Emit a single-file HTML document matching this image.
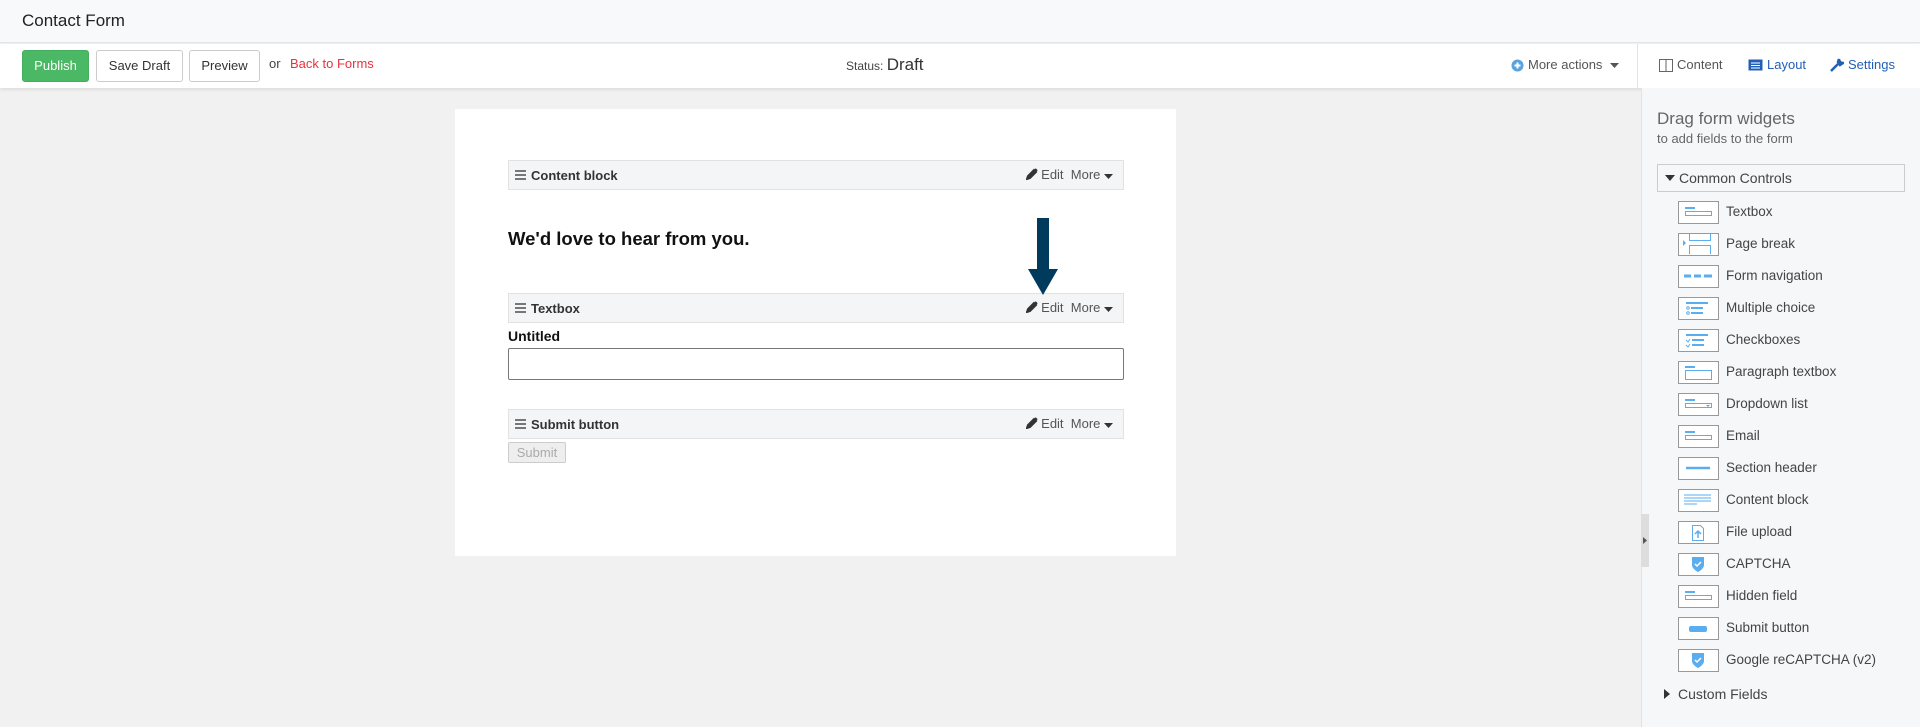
<!DOCTYPE html>
<html><head><meta charset="utf-8"><style>
*{box-sizing:border-box;margin:0;padding:0}
body{width:1920px;height:727px;overflow:hidden;background:#f1f1f1;font-family:"Liberation Sans",sans-serif;position:relative;color:#333}
.abs{position:absolute}
#top{left:0;top:0;width:1920px;height:43px;background:#f8f9fb;border-bottom:1px solid #e2e3e6}
#top span{position:absolute;left:22px;top:11px;font-size:17px;color:#222}
#bar{left:0;top:44px;width:1920px;height:44px;background:#fff;box-shadow:0 2px 3px rgba(0,0,0,.08)}
.btn{position:absolute;top:6px;height:32px;border:1px solid #ccc;border-radius:3px;background:#fff;font-size:13px;color:#333;text-align:center;line-height:30px}
#panel{left:1641px;top:88px;width:279px;height:639px;background:#f6f7f9;border-left:1px solid #e3e3e3}
.item{position:absolute;left:36px;height:23px}
.ib{position:absolute;left:0;top:0;width:41px;height:23px;border:1.5px solid #999;background:#fff}
.it{position:absolute;left:48px;top:3px;font-size:13.5px;color:#444;white-space:nowrap}
.card{left:455px;top:109px;width:721px;height:447px;background:#fff}
.wb{position:absolute;left:53px;width:616px;height:30px;background:#f4f5f7;border:1px solid #e1e2e4;font-size:13px;font-weight:bold;color:#333}
.wb .h{position:absolute;left:6px;top:9px;width:11px;height:10px;border-top:2px solid #777;border-bottom:2px solid #777}
.wb .h:after{content:"";position:absolute;left:0;top:2px;width:11px;height:2px;background:#777}
.wb .t{position:absolute;left:22px;top:7px}
.wb .r{position:absolute;right:10px;top:6px;font-weight:normal;color:#555;font-size:13px;white-space:nowrap}
.wb .r svg{vertical-align:-1px}
</style></head><body>
<div id="top" class="abs"><span>Contact Form</span></div>
<div id="bar" class="abs">
<div class="btn" style="left:22px;width:67px;background:#4bb866;border-color:#45ad5e;color:#fff">Publish</div>
<div class="btn" style="left:96px;width:87px">Save Draft</div>
<div class="btn" style="left:189px;width:71px">Preview</div>
<span class="abs" style="left:269px;top:12px;font-size:13px;color:#444">or</span>
<span class="abs" style="left:290px;top:12px;font-size:13px;color:#e8333f">Back to Forms</span>
<span class="abs" style="left:846px;top:11px;font-size:12px;color:#444">Status: <span style="font-size:17px;color:#333">Draft</span></span>
<svg class="abs" style="left:1511px;top:15px" width="13" height="13"><circle cx="6.5" cy="6.5" r="6" fill="#5aa2e0"/><path d="M6.5 3.5v6M3.5 6.5h6" stroke="#fff" stroke-width="2"/></svg>
<span class="abs" style="left:1528px;top:13px;font-size:13px;color:#555">More actions</span>
<svg class="abs" style="left:1610px;top:19px" width="9" height="6"><path d="M0 0h9L4.5 5z" fill="#555"/></svg>
<div class="abs" style="left:1637px;top:0;width:1px;height:44px;background:#e4e4e4"></div>
<svg class="abs" style="left:1659px;top:15px" width="14" height="13"><rect x=".5" y=".5" width="13" height="12" fill="none" stroke="#666"/><path d="M7 1v11" stroke="#666"/></svg>
<span class="abs" style="left:1677px;top:13px;font-size:13px;color:#555">Content</span>
<svg class="abs" style="left:1748px;top:15px" width="15" height="12"><rect x=".5" y=".5" width="14" height="11" fill="#2360b5"/><path d="M3 4h9M3 6.5h9M3 9h9" stroke="#fff"/></svg>
<span class="abs" style="left:1767px;top:13px;font-size:13px;color:#2360b5">Layout</span>
<svg class="abs" style="left:1830px;top:14px" width="14" height="14"><path d="M1 13L8 6M9 1a4 4 0 0 0 4 4l-3 2-2-3z" stroke="#2360b5" stroke-width="2.5" fill="#2360b5"/></svg>
<span class="abs" style="left:1848px;top:13px;font-size:13px;color:#2360b5">Settings</span>
</div>

<div class="card abs">
<div class="wb" style="top:51px"><div class="h"></div><span class="t">Content block</span><span class="r"><svg width="12" height="12"><path d="M1 11l1-3 6-6 2 2-6 6z M9 1l2 2" stroke="#333" stroke-width="2" fill="#333"/></svg> Edit &nbsp;More <svg width="9" height="6"><path d="M0 0h9L4.5 5z" fill="#333"/></svg></span></div>
<div class="abs" style="left:53px;top:119px;font-size:18.5px;font-weight:bold;color:#111">We'd love to hear from you.</div>
<div class="wb" style="top:184px"><div class="h"></div><span class="t">Textbox</span><span class="r"><svg width="12" height="12"><path d="M1 11l1-3 6-6 2 2-6 6z M9 1l2 2" stroke="#333" stroke-width="2" fill="#333"/></svg> Edit &nbsp;More <svg width="9" height="6"><path d="M0 0h9L4.5 5z" fill="#333"/></svg></span></div>
<div class="abs" style="left:53px;top:219px;font-size:14px;font-weight:bold;color:#111">Untitled</div>
<div class="abs" style="left:53px;top:239px;width:616px;height:32px;border:1px solid #777;border-radius:2px"></div>
<div class="wb" style="top:300px"><div class="h"></div><span class="t">Submit button</span><span class="r"><svg width="12" height="12"><path d="M1 11l1-3 6-6 2 2-6 6z M9 1l2 2" stroke="#333" stroke-width="2" fill="#333"/></svg> Edit &nbsp;More <svg width="9" height="6"><path d="M0 0h9L4.5 5z" fill="#333"/></svg></span></div>
<div class="abs" style="left:53px;top:333px;width:58px;height:21px;border:1px solid #ccc;border-radius:2px;background:#eee;color:#aaa;font-size:13px;text-align:center;line-height:19px">Submit</div>
</div>
<svg class="abs" style="left:1028px;top:218px" width="30" height="78"><rect x="9" y="0" width="12" height="52" fill="#003a5c"/><path d="M0 51h30L15 77z" fill="#003a5c"/></svg>

<div id="panel" class="abs">
<div class="abs" style="left:15px;top:21px;font-size:17px;color:#666">Drag form widgets</div>
<div class="abs" style="left:15px;top:43px;font-size:13px;color:#666">to add fields to the form</div>
<div class="abs" style="left:15px;top:76px;width:248px;height:28px;border:1px solid #ccc;font-size:14px;color:#444;padding:5px 0 0 21px">Common Controls<svg class="abs" style="left:7px;top:10px" width="10" height="7"><path d="M0 0h10L5 6z" fill="#333"/></svg></div>

<div class="item" style="top:113px"><div class="ib"><svg width="38" height="20"><path d="M6 6h10" stroke="#5aaef0" stroke-width="2"/><rect x="6.5" y="9.5" width="26" height="4" fill="none" stroke="#5aaef0"/></svg></div><span class="it">Textbox</span></div>
<div class="item" style="top:145px"><div class="ib"><svg width="38" height="20"><path d="M4 6l3 3-3 3z" fill="#5aaef0"/><path d="M10.5 0v6.5h21V0M10.5 20v-8.5h21V20" fill="none" stroke="#5aaef0"/></svg></div><span class="it">Page break</span></div>
<div class="item" style="top:177px"><div class="ib"><svg width="38" height="20"><path d="M5 10h7M15 10h7M25 10h8" stroke="#5aaef0" stroke-width="3"/></svg></div><span class="it">Form navigation</span></div>
<div class="item" style="top:209px"><div class="ib"><svg width="38" height="20"><path d="M7 5h22M12 10h12M12 15h12" stroke="#5aaef0" stroke-width="2"/><circle cx="9" cy="10" r="1.3" fill="none" stroke="#5aaef0"/><circle cx="9" cy="15" r="1.3" fill="none" stroke="#5aaef0"/></svg></div><span class="it">Multiple choice</span></div>
<div class="item" style="top:241px"><div class="ib"><svg width="38" height="20"><path d="M7 5h22M13 10h12M13 15h12" stroke="#5aaef0" stroke-width="2"/><path d="M7 10l2 2 2-3M7 15l2 2 2-3" stroke="#5aaef0" fill="none"/></svg></div><span class="it">Checkboxes</span></div>
<div class="item" style="top:273px"><div class="ib"><svg width="38" height="20"><path d="M6 5h10" stroke="#5aaef0" stroke-width="2"/><rect x="6.5" y="8.5" width="26" height="9" fill="none" stroke="#5aaef0"/></svg></div><span class="it">Paragraph textbox</span></div>
<div class="item" style="top:305px"><div class="ib"><svg width="38" height="20"><path d="M6 6h10" stroke="#5aaef0" stroke-width="2"/><rect x="6.5" y="9.5" width="26" height="4" fill="none" stroke="#5aaef0"/><path d="M27 11h4l-2 2z" fill="#5aaef0"/></svg></div><span class="it">Dropdown list</span></div>
<div class="item" style="top:337px"><div class="ib"><svg width="38" height="20"><path d="M6 6h10" stroke="#5aaef0" stroke-width="2"/><rect x="6.5" y="9.5" width="26" height="4" fill="none" stroke="#5aaef0"/></svg></div><span class="it">Email</span></div>
<div class="item" style="top:369px"><div class="ib"><svg width="38" height="20"><path d="M7 10h24" stroke="#5aaef0" stroke-width="2.5"/></svg></div><span class="it">Section header</span></div>
<div class="item" style="top:401px"><div class="ib"><svg width="38" height="20"><path d="M5 5h27M5 8h27M5 11h27M5 14h13" stroke="#5aaef0"/></svg></div><span class="it">Content block</span></div>
<div class="item" style="top:433px"><div class="ib"><svg width="38" height="20"><path d="M13.5 3.5h8l3 3v12h-11z" fill="none" stroke="#5aaef0"/><path d="M19 16v-6M16 12l3-3 3 3" stroke="#5aaef0" stroke-width="1.5" fill="none"/></svg></div><span class="it">File upload</span></div>
<div class="item" style="top:465px"><div class="ib"><svg width="38" height="20"><path d="M13 3h12v8c0 4-6 7-6 7s-6-3-6-7z" fill="#5aaef0"/><path d="M16 10l2 2 4-4" stroke="#fff" stroke-width="1.5" fill="none"/></svg></div><span class="it">CAPTCHA</span></div>
<div class="item" style="top:497px"><div class="ib"><svg width="38" height="20"><path d="M6 6h10" stroke="#5aaef0" stroke-width="2"/><rect x="6.5" y="9.5" width="26" height="4" fill="none" stroke="#5aaef0"/></svg></div><span class="it">Hidden field</span></div>
<div class="item" style="top:529px"><div class="ib"><svg width="38" height="20"><rect x="10" y="8" width="18" height="6" rx="2" fill="#5aaef0"/></svg></div><span class="it">Submit button</span></div>
<div class="item" style="top:561px"><div class="ib"><svg width="38" height="20"><path d="M13 3h12v8c0 4-6 7-6 7s-6-3-6-7z" fill="#5aaef0"/><path d="M16 10l2 2 4-4" stroke="#fff" stroke-width="1.5" fill="none"/></svg></div><span class="it">Google reCAPTCHA (v2)</span></div>

<svg class="abs" style="left:22px;top:601px" width="6" height="10"><path d="M0 0l6 5-6 5z" fill="#333"/></svg>
<div class="abs" style="left:36px;top:598px;font-size:14px;color:#444">Custom Fields</div>
</div>
<div class="abs" style="left:1641px;top:514px;width:8px;height:53px;background:#ddd"></div>
<svg class="abs" style="left:1643px;top:537px" width="4" height="7"><path d="M0 0l4 3.5L0 7z" fill="#555"/></svg>
</body></html>
